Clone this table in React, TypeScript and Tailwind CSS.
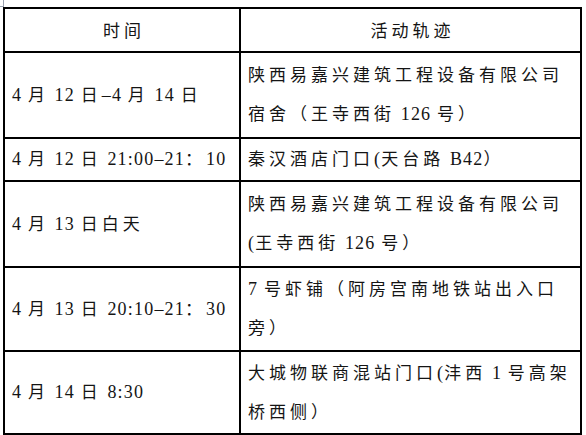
import React from "react";

const rows = [
  { time: "4 月 12 日–4 月 14 日", place: ["陕西易嘉兴建筑工程设备有限公司", "宿舍（王寺西街 126 号）"], h: "h-[86px]" },
  { time: "4 月 12 日 21:00–21：10", place: ["秦汉酒店门口(天台路 B42）"], h: "h-[43px]" },
  { time: "4 月 13 日白天", place: ["陕西易嘉兴建筑工程设备有限公司", "(王寺西街 126 号）"], h: "h-[86px]" },
  { time: "4 月 13 日 20:10–21：30", place: ["7 号虾铺（阿房宫南地铁站出入口", "旁）"], h: "h-[84px]" },
  { time: "4 月 14 日 8:30", place: ["大城物联商混站门口(沣西 1 号高架", "桥西侧）"], h: "h-[83px]" },
];

// CJK runs get the wide character spacing, latin/digits keep their own width
const Txt = ({ s }: { s: string }) => (
  <span>
    {s.split(/([\u3000-\u9fff\uff00-\uffef]+)/).map((part, i) =>
      i % 2 === 1 ? (
        <span key={i} className="tracking-[4px]">
          {part}
        </span>
      ) : (
        <span key={i} className="text-[18px] tracking-[1.2px] whitespace-pre">
          {part}
        </span>
      )
    )}
  </span>
);

const App = () => {
  return (
    <div className="relative w-[586px] h-[435px] bg-white pl-[3px] pt-[7px] text-[17px] text-[#141414] font-['Liberation_Serif','Noto_Sans_CJK_SC',serif]">
      <div className="absolute left-0 top-0 w-[4px] h-[7px] border-r border-b border-gray-400" />
      <div className="grid grid-cols-[236px_341px] w-[579px] border-l-2 border-t-2 border-black">
        <div className="h-[44px] flex items-center justify-center border-r-2 border-b-2 border-black pl-[4px] pt-[2px]">
          <Txt s="时间" />
        </div>
        <div className="h-[44px] flex items-center justify-center border-r-2 border-b-2 border-black pl-[4px] pt-[2px]">
          <Txt s="活动轨迹" />
        </div>
        {rows.map((r, i) => (
          <React.Fragment key={i}>
            <div className={`${r.h} flex items-center pl-[7px] whitespace-nowrap border-r-2 border-b-2 border-black`}>
              <Txt s={r.time} />
            </div>
            <div className={`${r.h} flex flex-col justify-center pl-[7px] leading-[38px] whitespace-nowrap border-r-2 border-b-2 border-black`}>
              {r.place.map((line, j) => (
                <div key={j}>
                  <Txt s={line} />
                </div>
              ))}
            </div>
          </React.Fragment>
        ))}
      </div>
    </div>
  );
};

export default App;
